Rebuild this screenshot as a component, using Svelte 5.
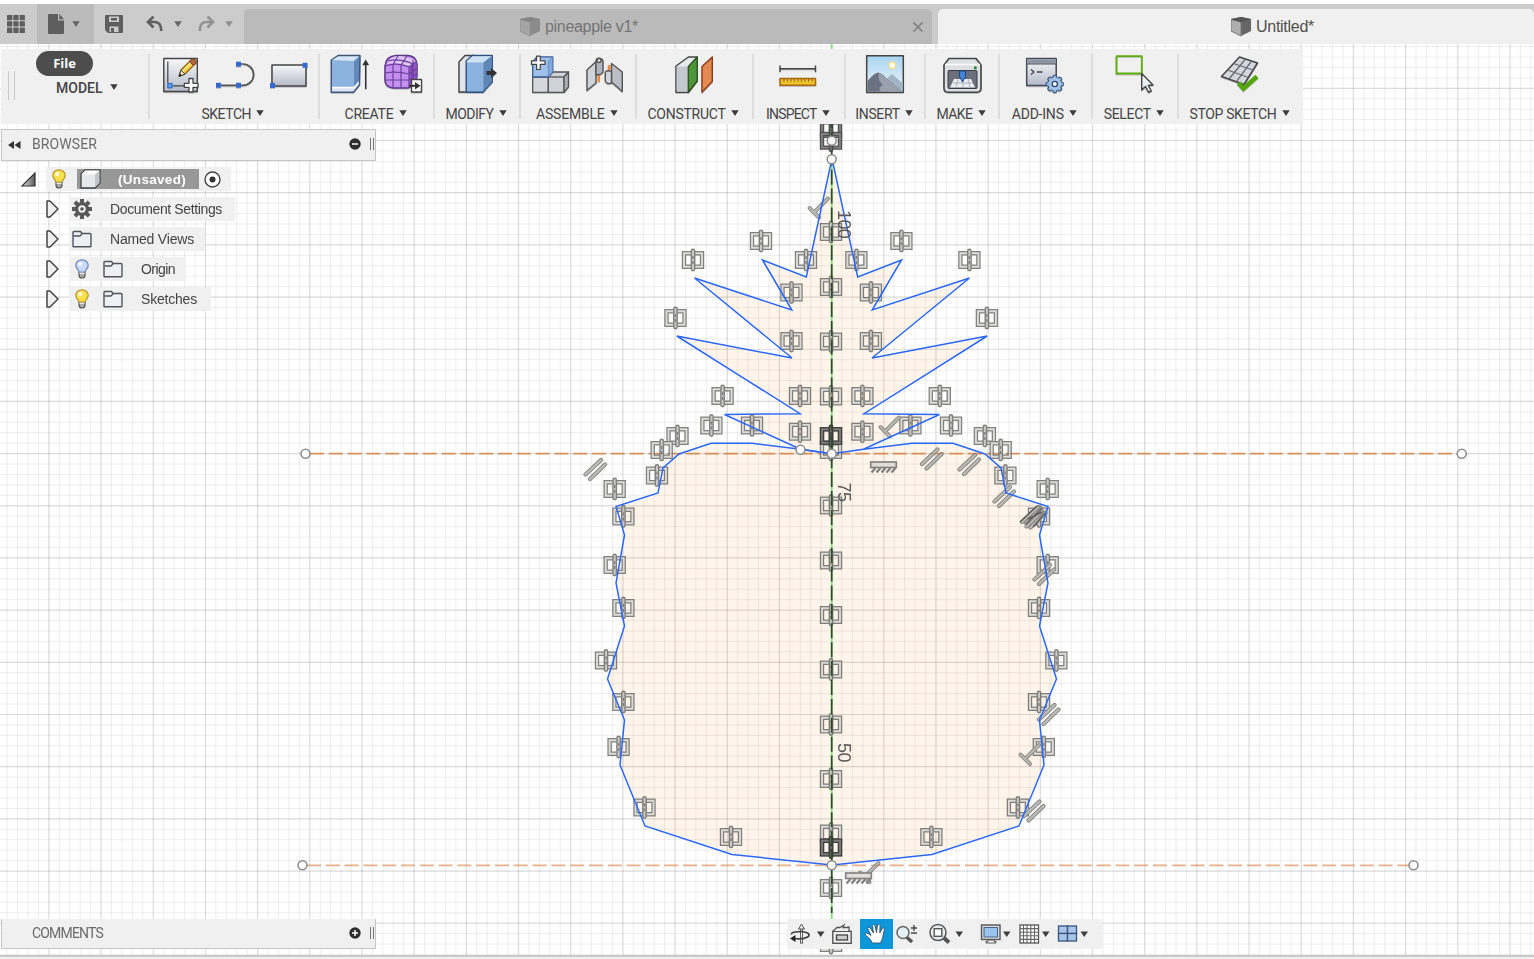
<script>
  const groups = [
    { name: 'SKETCH', w: 170.5, icons: ['sketch', 'line', 'rect'], label: 49.5, cls: 'nudge' },
    { name: 'CREATE', w: 115, icons: ['extrude', 'form'], label: 49 },
    { name: 'MODIFY', w: 86, icons: ['press'], label: 48 },
    { name: 'ASSEMBLE', w: 115.5, icons: ['component', 'joint'], label: 68.5 },
    { name: 'CONSTRUCT', w: 117, icons: ['plane'], label: 78 },
    { name: 'INSPECT', w: 92.5, icons: ['measure'], label: 50.5 },
    { name: 'INSERT', w: 80, icons: ['image'], label: 44.5 },
    { name: 'MAKE', w: 74, icons: ['printer'], label: 36 },
    { name: 'ADD-INS', w: 92.5, icons: ['script'], label: 52 },
    { name: 'SELECT', w: 86.5, icons: ['select'], label: 47 },
    { name: 'STOP SKETCH', w: 125, icons: ['stop'], label: 87 }
  ];

  // Spreads the letters of a label evenly over a set width.
  function fit(node, width) {
    const natural = node.getBoundingClientRect().width;
    node.style.letterSpacing = (width - natural) / node.textContent.length + 'px';
  }

  const range = (n) => Array.from({ length: n }, (_, i) => i);
  const OX = 831.6, OY = 453.6, STEP = 10.436;
  const vLines = range(148).map((i) => i - 79).map((i) => ({ p: OX + i * STEP, major: i % 5 === 0 })).filter((l) => l.p > 0);
  const hLines = range(92).map((i) => i - 43).map((i) => ({ p: OY + i * STEP, major: i % 5 === 0 })).filter((l) => l.p > 0);

  const crownLeft = [[831.7, 160], [806.3, 277], [762.5, 260], [791.8, 310], [694.5, 278], [792, 358], [676.8, 336], [800, 413.7], [724.5, 414.5], [800.5, 449.2]];
  const bodyLeft = [[800.5, 449.2], [752, 443.3], [711, 443.3], [679, 454], [663, 468], [658, 493], [616, 506.5], [624.5, 535], [616, 583], [624.5, 626], [607.5, 679], [624.5, 720], [620, 765], [645, 826], [732, 854.5], [831.7, 865]];
  const flip = (pts) => [...pts].reverse().map(([x, y]) => [1664 - x, y]);
  const str = (pts) => pts.map((p) => p.join(',')).join(' ');
  const crown = str([...crownLeft, [831.7, 453.7], ...flip(crownLeft)]);
  const body = str([[831.7, 453.7], ...bodyLeft, ...flip(bodyLeft)]);

  const pairs = [[761, 241], [693, 260], [806, 260], [791.5, 292.5], [675.5, 318], [791.5, 341], [722.6, 396], [800, 396], [800, 431.7], [711.4, 425.5], [752, 425.5], [677.5, 436], [661.7, 450], [657, 475.5], [614.7, 489], [623.4, 516.5], [614.7, 565], [623.4, 608], [606, 660.5], [623.4, 702], [618.6, 747], [644.5, 807.5], [731, 837]];
  const sym = [
    ...pairs.flatMap(([x, y]) => [[x, y], [1662.4 - x, y]]),
    ...[232, 287, 341.5, 396.5, 436, 450, 505.5, 560.5, 615, 669.5, 724.5, 779, 833.5, 847.5, 888, 943].map((y) => [831, y])
  ];
  const darkSym = [[831, 129], [831, 140.8], [831, 436], [831, 847.5]];
  const parallels = [[594.5, 469.5], [931, 459], [968.5, 464.5], [1003.5, 496.5], [1031, 517], [1035, 518], [1043.5, 574.5], [1048, 714.5], [1033, 811]];
  const perps = [[814, 212.5], [885, 431.5], [1025, 759], [864.5, 877]];
  const hatches = [[883.5, 467], [858.5, 878]];
  const points = [[831.7, 140.7], [831.7, 159.3], [800.5, 449.7], [831.7, 453.7], [831.7, 865.3], [305.5, 453.7], [1461.7, 453.7], [302.5, 865.3], [1413.5, 865.3]];
  const dims = [['100', 838, 210], ['75', 838, 482.5], ['50', 838, 743]];

  const rows = [
    { text: 'Document Settings', w: 112, total: 166, icons: ['gear'] },
    { text: 'Named Views', w: 84, total: 136, icons: ['folder'] },
    { text: 'Origin', w: 34, total: 117, icons: ['bulbOff', 'folder'] },
    { text: 'Sketches', w: 56, total: 142, icons: ['bulb', 'folder'] }
  ];
</script>

{#snippet caret(cls)}<svg class="caret {cls}" viewBox="0 0 8 6"><path d="M.3 .3H7.7L4 6Z" /></svg>{/snippet}

{#snippet cube(dark)}
  <svg width="20" height="20" viewBox="0 0 20 20">
    <path d="M0 2L10 0L20 2V14L10 19L0 14Z" fill={dark ? '#666' : '#8b8b8b'} />
    <path d="M0 2.5L10 5V19L0 14Z" fill={dark ? '#b0b0b0' : '#a5a5a5'} stroke={dark ? '#777' : '#929292'} stroke-width="1" />
    <path d="M0 2L10 0L20 2L10 5Z" fill={dark ? '#555' : '#858585'} />
  </svg>
{/snippet}

{#snippet bulb(on)}
  <svg width="14" height="20" viewBox="0 0 14 20">
    <path d="M4 11H10V16Q10 19 7 19Q4 19 4 16Z" fill="#aaa" stroke="#555" stroke-width="1.2" />
    <path d="M4.5 14.2H9.5" stroke="#eee" stroke-width="1.4" />
    <path d="M7 .8C3.3 .8 .8 3.3 .8 6.5C.8 9.5 3.6 10.6 4 13H10C10.4 10.6 13.2 9.5 13.2 6.5C13.2 3.3 10.7 .8 7 .8Z" fill={on ? '#f8df4c' : '#c8daff'} stroke={on ? '#b8962a' : '#7286ad'} stroke-width="1.2" />
    <circle cx="5.2" cy="5" r="2.2" fill="#fff" opacity=".75" />
  </svg>
{/snippet}

{#snippet treeIcon(kind)}
  {#if kind === 'gear'}
    <svg width="20" height="20" viewBox="0 0 20 20">
      <g fill="#595959">
        {#each range(8) as i}<rect x="8" y="0" width="4" height="5" transform="rotate({i * 45} 10 10)" />{/each}
      </g>
      <circle cx="10" cy="10" r="5.4" fill="none" stroke="#595959" stroke-width="3.4" />
      <circle cx="10" cy="10" r="1.8" fill="#595959" />
    </svg>
  {:else if kind === 'folder'}
    <svg width="20" height="20" viewBox="0 0 20 20">
      <path d="M1 17V3.5Q1 2.5 2 2.5H8.5L10 4.5H18Q19 4.5 19 5.5V17Q19 17.8 18 17.8H2Q1 17.8 1 17Z" fill="#eff0f4" stroke="#50545c" stroke-width="1.4" />
      <path d="M1.5 7H8L10 4.8" fill="none" stroke="#50545c" stroke-width="1.3" />
    </svg>
  {:else}
    <span class="bulb">{@render bulb(kind === 'bulb')}</span>
  {/if}
{/snippet}

{#snippet tool(kind)}
  <svg width="40" height="40" viewBox="0 0 40 40" fill="none" stroke-linejoin="round">
    {#if kind === 'sketch'}
      <rect x="2.8" y="4.5" width="33.5" height="33" fill="url(#silver)" stroke="#444" stroke-width="1.4" />
      <path d="M6.8 7.5V29M12 31.8H24" stroke="#444" stroke-width="1.2" />
      <rect x="6.8" y="29.5" width="4.4" height="4.4" fill="#55a0ee" stroke="#2a62b8" />
      <path d="M18 22.5L20 16L30.5 5.5L34.5 9.5L24 20Z" fill="#f9c838" stroke="#8a6218" stroke-width="1.2" />
      <path d="M21.5 17.5L31.5 7.5" stroke="#fff0a0" stroke-width="1.5" />
      <path d="M28.5 7.5L31 5Q32.5 4 34.5 6T35.3 9L32.5 11.5Z" fill="#b5683c" stroke="#6b3d28" />
      <path d="M18 22.5L20 16L24 20Z" fill="#f4dfb5" stroke="#444" />
      <path d="M18 22.5L19 19.5L21 21.5Z" fill="#222" />
      <path d="M28 24.5H32V29.3H37V33.3H32V38H28V33.3H23.3V29.3H28Z" fill="#fff" stroke="#444" stroke-width="1.3" />
    {:else if kind === 'line'}
      <path d="M3.3 31.3H28A10.6 10.6 0 0 0 28 10H23.3" stroke="#555" stroke-width="1.7" />
      <g fill="#356ad0"><rect x="1" y="28.8" width="5" height="5" /><rect x="21" y="28.8" width="5" height="5" /><rect x="21" y="7.7" width="5" height="5" /></g>
    {:else if kind === 'rect'}
      <rect x="3" y="11" width="34" height="21" fill="url(#silver)" stroke="#444" stroke-width="1.5" />
      <g fill="#356ad0"><rect x="1" y="29" width="5" height="5" /><rect x="33.5" y="8.8" width="5" height="5" /></g>
    {:else if kind === 'extrude'}
      <path d="M2.3 6L9 1.5H31L30.5 31L24.5 38.2H2.3Z" fill="#dbe6f2" />
      <path d="M2.3 6H25V33H2.3Z" fill="#8db2dd" /><path d="M2.3 6L9 1.5H31L25 7Z" fill="#d6e7f8" />
      <path d="M25 7L31 1.5V26L25 33Z" fill="#6389b8" />
      <path d="M2.3 33.5H25L31 27" stroke="#fff" stroke-width="1.3" />
      <path d="M2.3 6L9 1.5H31L30.5 31L24.5 38.2H2.3Z" stroke="#3e5677" stroke-width="1.4" />
      <path d="M36.7 35V9" stroke="#333" stroke-width="1.5" /><path d="M33.5 11L36.7 5.5L40 11Z" fill="#333" />
    {:else if kind === 'form'}
      <path d="M2 12Q3 2 13 1.5H25Q33 2 34 10V22Q32 32 25 34H10Q2 33 2 26Z" fill="#c390f0" stroke="#5c3785" stroke-width="1.5" />
      <path d="M26 13L33.5 8V24L26 32Z" fill="#9455cc" />
      <path d="M4 10Q14 8 26 12L33 7Q24 2 14 2Q6 3 4 10Z" fill="#dfc2f7" />
      <path d="M2 12Q14 8 26 13V33M26 13L33.5 7.5M10 10.5V34M18 11V34M2 19Q14 17 26 20L34 14.5M2 26H26L33.5 20M10 10.5L15 2M18 11L24 2M5 7Q16 4 29 9.5V30M30 6V26" stroke="#6d409b" stroke-width="1.2" />
      <rect x="28.5" y="25.5" width="10" height="12.5" fill="#fff" stroke="#444" stroke-width="1.4" />
      <path d="M26 31.8H33" stroke="#333" stroke-width="2" /><path d="M32 28L37.5 31.8L32 35.5Z" fill="#333" />
    {:else if kind === 'press'}
      <path d="M2 8L8 1.5H17L10 8V38H2Z" fill="#e1e4e9" stroke="#444" stroke-width="1.4" />
      <path d="M9.2 7L15 1.5H35.2V28L26 38.3H9.2Z" fill="#8bb2df" stroke="#30507c" stroke-width="1.4" />
      <path d="M9.8 7L15.5 2.2H34.5L26.5 8.5H9.8Z" fill="#cfe1f4" />
      <path d="M26.5 8.5L34.5 2.2V28L26.5 37.3Z" fill="#5e86b6" />
      <path d="M29.5 17H34V14L40 19L34 24V21H29.5Z" fill="#333" />
    {:else if kind === 'component'}
      <g stroke="#555" stroke-width="1.3">
        <path d="M2.7 23H18.3V38.3H2.7Z" fill="#d5d7dd" /><path d="M18.3 23L23 18H38.5L34 23V38.3H18.3Z" fill="#cfd2d8" />
        <path d="M34 23L38.5 18V33L34 38.3Z" fill="#a9adb7" /><path d="M18.3 23H34" />
        <path d="M2.7 7.7L7 2.8H22.7V18L18.3 23H2.7Z" fill="#9fc0ea" stroke="#3b5d91" />
        <path d="M18.3 7.7L22.7 2.8V18L18.3 23Z" fill="#83a8da" stroke="#5f84b8" stroke-width=".8" />
      </g>
      <path d="M6.6 2.2H10.2V6.8H15V10.4H10.2V15.5H6.6V10.4H1.5V6.8H6.6Z" fill="#fff" stroke="#444" stroke-width="1.2" />
    {:else if kind === 'joint'}
      <path d="M14.8 18V27.7M25 11V20" stroke="#f28a3c" stroke-width="2.5" />
      <g stroke="#555" stroke-width="1.4">
        <path d="M3 16L12 7.5V29L3 36.5Z" fill="#ced2d9" /><path d="M12 7.5Q12 4 15 4.3Q19.5 5 19 8V18Q17 21.5 12 20.5Z" fill="#b1b6c0" />
        <circle cx="15" cy="6.5" r="2" fill="#eee" />
        <path d="M27.5 9.5L38.3 18V37.5L27.5 28Z" fill="#b9bec7" /><path d="M21.3 18Q24 15.5 27.5 18V29Q23 31 21.3 27Z" fill="#d2d6dc" />
      </g>
    {:else if kind === 'plane'}
      <path d="M2 12L14.5 3H23V27L14.5 38.3H2Z" fill="#e8eaee" stroke="#444" stroke-width="1.4" />
      <path d="M2.7 12.5H14V37.6H2.7Z" fill="#c4c8d1" />
      <path d="M14.3 12.5L23.2 3V27L14.3 38.2Z" fill="#4e9438" stroke="#27541d" stroke-width="1.3" />
      <path d="M28 12.5L38.3 3V27.5L28 38.2Z" fill="#e58953" stroke="#8a3c18" stroke-width="1.4" />
    {:else if kind === 'measure'}
      <path d="M2 14.7H37.5M2 11.5V18M37.5 11.5V18" stroke="#444" stroke-width="1.4" />
      <rect x="2" y="24.5" width="35.5" height="6.8" fill="#edc22e" stroke="#a86a13" stroke-width="1.5" />
      <path d="M6 25v2.5M9.5 25v2.5M13 25v2.5M16.5 25v2.5M20 25v2.5M23.5 25v2.5M27 25v2.5M30.5 25v2.5M34 25v2.5" stroke="#8a5a10" />
    {:else if kind === 'image'}
      <rect x="1.7" y="1.7" width="36.6" height="36.6" fill="url(#sky)" stroke="#444" stroke-width="1.5" />
      <circle cx="27.3" cy="11.3" r="3.3" fill="#fff" stroke="#f6dd8c" stroke-width="1.5" />
      <path d="M18 28L27 20L37.6 29V37.5H18Z" fill="#a3b3c6" />
      <path d="M2.5 27Q9 19 13 18.5Q17 19 21 24L37 37.5H2.5Z" fill="#6a7180" /><path d="M14 19Q18 20 22 25L37 37.5H16Q12 34 18 31Q12 26 14 19Z" fill="#9aa1ae" />
    {:else if kind === 'printer'}
      <path d="M2 11L7 4.5H34L39 11V34Q39 38 35 38.2H6Q2 38 2 34Z" fill="#dddfe4" stroke="#444" stroke-width="1.6" />
      <path d="M3 10.5H38" stroke="#fff" stroke-width="1.5" />
      <rect x="6" y="16.5" width="29" height="18" rx="1" fill="#6a6f7a" stroke="#3a3d44" />
      <path d="M12 25H29L33 33.5H8Z" fill="#eceef2" /><path d="M11 29H31M16 25L14 33M21 25V33M26 25L28 33" stroke="#aab0bc" />
      <path d="M17.5 17H23.5V22.5L20.5 28L17.5 22.5Z" fill="#4384d8" stroke="#1b4686" /><rect x="32" y="12.5" width="2.7" height="2.7" fill="#1c8a2c" />
    {:else if kind === 'script'}
      <rect x="1.7" y="4.5" width="29.5" height="27" fill="url(#silver)" stroke="#444b58" stroke-width="1.5" />
      <rect x="2.5" y="5.2" width="28" height="4.5" fill="#8e96a6" /><path d="M2 10H31" stroke="#4a5160" />
      <path d="M6 15.5L9 18L6 20.5M12 18H17.5" stroke="#444" stroke-width="1.5" />
      <g fill="#8cb1dd" stroke="#28466f">{#each range(8) as i}<rect x="27.8" y="21.3" width="4" height="6" rx="1.5" transform="rotate({i * 45} 29.8 30)" />{/each}</g>
      <circle cx="29.8" cy="30" r="6.4" fill="#a3c2e6" /><circle cx="29.8" cy="30" r="2.6" fill="#fff" stroke="#28466f" stroke-width="1.3" />
    {:else if kind === 'select'}
      <rect x="2.5" y="2.2" width="25.3" height="17.3" fill="none" stroke="#5fae0c" stroke-width="1.8" />
      <path d="M27.7 19.5V36L31.5 32.5L34.5 38.3L37.3 37L34.3 31.5L39 31Z" fill="#eceff4" stroke="#444" stroke-width="1.4" />
    {:else}
      <path d="M19.5 3L37.5 9L24 30.5L1.5 22.5Z" fill="#d4d7dd" stroke="#444" stroke-width="1.5" />
      <path d="M25.5 5L9 25M31.5 7L16.5 27.7M13.5 9.5L33 16M7.5 16L28.5 23.5" stroke="#666a72" stroke-width="1.3" />
      <path d="M18.5 29L23.5 34.5L37 22.5" stroke="#52a50f" stroke-width="4.6" stroke-linejoin="miter" />
    {/if}
  </svg>
{/snippet}

<div class="app">
  <svg class="canvas" width="1534" height="955" viewBox="0 0 1534 955">
    <defs>
      <linearGradient id="silver" x1="0" y1="0" x2="0" y2="1"><stop offset="0" stop-color="#f8f8fa" /><stop offset="1" stop-color="#b4bac8" /></linearGradient>
      <linearGradient id="sky" x1="0" y1="0" x2="0" y2="1"><stop offset="0" stop-color="#a9d4f0" /><stop offset="1" stop-color="#f0f8fc" /></linearGradient>
      <linearGradient id="fold" x1="0" y1="0" x2="1" y2="0"><stop offset="0" stop-color="#eee" /><stop offset="1" stop-color="#555" /></linearGradient>
      <g id="mirror" fill="none">
        <path d="M-2 -6.8H-9V6.8H-2M2 -6.8H9V6.8H2" stroke="#666" stroke-width="4.4" />
        <path d="M-2 -6.8H-9V6.8H-2M2 -6.8H9V6.8H2" stroke="#d6d6d2" stroke-width="1.9" />
        <rect x="-1.7" y="-10.7" width="3.4" height="21.4" rx="1.7" fill="#bdbdba" stroke="#666" stroke-width="1.4" />
        <path d="M0 -4V-1M0 1V4" stroke="#666" stroke-width="1.4" />
      </g>
      <g id="parallel" stroke-linecap="round">
        <path d="M-9 5L6.5 -9.5M-4.5 9.5L10.5 -5" stroke="#747472" stroke-width="4.4" />
        <path d="M-9 5L6.5 -9.5M-4.5 9.5L10.5 -5" stroke="#aeaeaa" stroke-width="2.2" />
      </g>
      <g id="perp" stroke-linecap="round">
        <path d="M-4.5 -4.5L5 5M0 0L14 -14" stroke="#787876" stroke-width="4" />
        <path d="M-4.5 -4.5L5 5M0 0L14 -14" stroke="#adada9" stroke-width="1.8" />
      </g>
      <g id="hatch">
        <rect x="-12.8" y="-5" width="25.6" height="5.5" fill="#dcdad4" stroke="#6a6a6a" stroke-width="1.7" />
        <path d="M-12 5.5L-8 1M-7 5.5L-3 1M-2 5.5L2 1M3 5.5L7 1M8 5.5L12 1" stroke="#6a6a6a" stroke-width="2.4" />
      </g>
    </defs>
    <rect width="1534" height="955" fill="#fff" />
    <g class="region"><polygon points={crown} /><polygon points={body} /></g>
    {#each vLines as l}<path class={l.major ? 'major' : 'minor'} d="M{l.p} 44V955" />{/each}
    {#each hLines as l}<path class={l.major ? 'major' : 'minor'} d="M0 {l.p}H1534" />{/each}
    <path d="M831.7 44V919" stroke="#86de7c" stroke-width="1.8" />
    <path d="M310 453.7H1457" class="construction strong" />
    <path d="M307 865.3H1409" class="construction" />
    <g class="symbols">
      {#each sym as [x, y]}<use href="#mirror" {x} {y} />{/each}
      {#each parallels as [x, y]}<use href="#parallel" {x} {y} />{/each}
      {#each perps as [x, y]}<use href="#perp" {x} {y} />{/each}
      {#each hatches as [x, y]}<use href="#hatch" {x} {y} />{/each}
    </g>
    <g class="stacked">{#each darkSym as [x, y]}<use href="#mirror" {x} {y} />{/each}</g>
    <path d="M1020 522L1037 506M1026 524L1042 508M1033 527L1045 513M1028 519L1042 512" stroke="#444" stroke-width="1.5" opacity=".75" />
    <path d="M831.7 124V913" stroke="#2d4a2d" stroke-width="1.7" stroke-dasharray="15 3.9" stroke-dashoffset="11" />
    <g class="outline"><polyline points={crown} /><polyline points={body} /></g>
    {#each dims as [t, x, y]}<text class="dim" transform="translate({x} {y}) rotate(90)">{t}</text>{/each}
    {#each points as [x, y]}<circle class="point" cx={x} cy={y} r="4.5" />{/each}
  </svg>

  <header class="tabs">
    <div class="quick">
      <span class="grid-btn"><svg width="18" height="18" viewBox="0 0 18 18" fill="#5e5e5e">{#each range(9) as i}<rect x={(i % 3) * 6.3} y={Math.floor(i / 3) * 6.3} width="5.3" height="5.3" rx=".5" />{/each}</svg></span>
      <span class="file-btn">
        <svg width="16" height="20" viewBox="0 0 16 20" fill="#5e5e5e"><path d="M0 1Q0 0 1 0H10V6.5H16V19Q16 20 15 20H1Q0 20 0 19Z" /><path d="M11.3 0L16 5.2H11.3Z" /></svg>
        {@render caret('mid')}
      </span>
      <span class="save"><svg width="18" height="18" viewBox="0 0 18 18"><path d="M0 1Q0 0 1 0H17Q18 0 18 1V17Q18 18 17 18H3L0 15Z" fill="#5e5e5e" /><path d="M4 1.5H14V7H4ZM4.5 11.5H13.5V17H4.5Z" fill="#ccc" /><path d="M6 3H12V5.5H6ZM6 13H9V17H6Z" fill="#5e5e5e" /></svg></span>
      <span class="undo"><svg width="17" height="16" viewBox="0 0 17 16"><path d="M7.5 .5L2 6L7.5 11.5M2 6H9Q15.5 6.5 15.2 15" fill="none" stroke="#606060" stroke-width="2.6" /></svg>{@render caret('mid')}</span>
      <span class="redo"><svg width="17" height="16" viewBox="0 0 17 16"><path d="M9.5 .5L15 6L9.5 11.5M15 6H8Q1.5 6.5 1.8 15" fill="none" stroke="#929292" stroke-width="2.6" /></svg>{@render caret('light')}</span>
    </div>
    <div class="tab idle">
      {@render cube(false)}<span class="title" use:fit={93}>pineapple v1*</span>
      <svg class="close" width="10" height="10" viewBox="0 0 10 10"><path d="M.5 .5L9.5 9.5M9.5 .5L.5 9.5" stroke="#868686" stroke-width="1.8" /></svg>
    </div>
    <div class="tab open">{@render cube(true)}<span class="title" use:fit={58}>Untitled*</span></div>
  </header>

  <nav class="toolbar">
    <div class="workspace">
      <i class="grip"></i>
      <div class="mode"><span class="tip">File</span><div class="model"><span use:fit={46.5}>MODEL</span>{@render caret('dark')}</div></div>
    </div>
    {#each groups as g}
      <section class="group" style:width="{g.w}px">
        <div class="icons {g.cls ?? ''}">{#each g.icons as k}{@render tool(k)}{/each}</div>
        <div class="label"><span use:fit={g.label}>{g.name}</span>{@render caret('dark')}</div>
      </section>
    {/each}
  </nav>

  <main>
    <aside>
      <div class="panel browser">
        <svg class="collapse" width="13" height="8" viewBox="0 0 13 8"><path d="M6 0V8L0 4ZM12.5 0V8L6.5 4Z" fill="#333" /></svg>
        <span class="heading" use:fit={65}>BROWSER</span>
        <svg class="knob" width="12" height="12" viewBox="0 0 12 12"><circle cx="6" cy="6" r="5.7" fill="#2e2e2e" /><path d="M3 6H9" stroke="#fff" stroke-width="1.5" /></svg>
        <i class="handle"></i>
      </div>
      <div class="tree">
        <div class="row root">
          <svg width="15" height="15" viewBox="0 0 15 15"><path d="M1 14L14 1V14Z" fill="url(#fold)" stroke="#333" stroke-width="1.2" /></svg>
          <div class="item first">
            {@render bulb(true)}
            <div class="doc">
              <svg width="21" height="20" viewBox="0 0 21 20"><path d="M1 5L5 1H20V14L15 19H1Z" fill="#e6e8eb" stroke="#444" stroke-width="1.3" /><path d="M1.8 5L5.3 1.6H19.3L15 5.5Z" fill="#fff" /><path d="M15 5.5L19.3 1.6V14L15 18.3Z" fill="#c2c5ca" /></svg>
              <b use:fit={68}>(Unsaved)</b>
            </div>
            <svg width="17" height="17" viewBox="0 0 17 17"><circle cx="8.5" cy="8.5" r="7.5" fill="#fff" stroke="#444" stroke-width="1.4" /><circle cx="8.5" cy="8.5" r="3" fill="#333" /></svg>
          </div>
        </div>
        {#each rows as r}
          <div class="row">
            <svg class="expand" width="13" height="18" viewBox="0 0 13 18"><path d="M1 1H4L12 9L4 17H1Z" fill="#eee" stroke="#444" stroke-width="1.5" stroke-linejoin="round" /></svg>
            <div class="item" style:width="{r.total}px">{#each r.icons as k}{@render treeIcon(k)}{/each}<span class="name"><span use:fit={r.w}>{r.text}</span></span></div>
          </div>
        {/each}
      </div>
    </aside>
    <div class="bottom">
      <div class="panel comments">
        <span class="heading" use:fit={71}>COMMENTS</span>
        <svg class="knob" width="12" height="12" viewBox="0 0 12 12"><circle cx="6" cy="6" r="5.7" fill="#2e2e2e" /><path d="M3 6H9M6 3V9" stroke="#fff" stroke-width="1.5" /></svg>
        <i class="handle"></i>
      </div>
      <div class="viewbar">
        <svg width="316" height="30" viewBox="0 0 316 30" fill="none">
          <path d="M14.5 9V24.5" stroke="#555" stroke-width="3" /><path d="M14.5 8V23.5" stroke="#eee" stroke-width="1.2" />
          <path d="M11.5 10L14.5 5L17.5 10Z" fill="#eee" stroke="#555" />
          <path d="M7 19.5Q16 21 21.5 17.5Q24 13.5 14.5 12.5Q4 12.5 4.5 15.5" stroke="#444" stroke-width="1.7" /><path d="M3 19.5L8.5 16V23Z" fill="#222" />
          <g fill="#3f3f3f"><path d="M30 12.500H37.5L33.7 18ZM168.5 12.500H176L172.2 18ZM216 12.500H223.5L219.7 18ZM255 12.500H262.5L258.7 18ZM293.5 12.500H301L297.2 18Z" /></g>
          <rect x="45.8" y="12.3" width="18.4" height="12" fill="#eee" stroke="#555" stroke-width="1.4" /><rect x="49.5" y="16" width="11" height="5" fill="#ccc" stroke="#444" stroke-width="1.3" />
          <path d="M46 12L50 8.5H53L57 6L56 8.5H60L62 8V12" fill="#eee" stroke="#555" stroke-width="1.3" />
          <rect x="73" width="33" height="30" fill="#0d96d8" />
          <path d="M85.5 24Q83 19 78.5 16Q77.5 14.5 79.5 14Q81.5 14.5 84 16.5L80.8 9.5Q81 7.5 82.8 8.5L86.5 14L85.5 6.5Q86.5 4.5 88 6.5L89.5 13.5L90.5 6Q92 4.5 93 6.5L92.8 14L95.5 9Q97.5 8 97.3 10.5L95.5 19L93.5 24Z" fill="#fff" stroke="#345" stroke-width=".8" />
          <path d="M119.5 18L125 23" stroke="#555" stroke-width="3.5" /><circle cx="116" cy="13.5" r="6" fill="#e5f0f6" stroke="#666" stroke-width="1.5" />
          <path d="M127 6V12M124 9H130M124 14H130" stroke="#444" stroke-width="1.3" />
          <path d="M156.5 18.5L162 23.5" stroke="#555" stroke-width="4" /><circle cx="151" cy="13.5" r="8" fill="#e8edf0" stroke="#555" stroke-width="1.5" /><rect x="147.2" y="9.7" width="7.6" height="7.6" fill="#fff" stroke="#555" stroke-width="1.4" />
          <rect x="194.5" y="6" width="18.5" height="14.5" fill="#ddd" stroke="#555" stroke-width="1.4" /><rect x="197" y="8.5" width="13.5" height="9.5" fill="#9cc3ee" stroke="#46688f" /><path d="M201 21V22.5H199V24H209V22.5H207V21Z" fill="#fff" stroke="#555" />
          <rect x="233" y="6" width="18.5" height="18" fill="#fff" stroke="#555" stroke-width="1.3" /><path d="M236.5 6V24M240 6V24M243.8 6V24M247.5 6V24M233 9.6H251.5M233 13.2H251.5M233 16.8H251.5M233 20.4H251.5" stroke="#666" stroke-width="1.1" />
          <g fill="#a9c5e8" stroke="#385580" stroke-width="1.3"><rect x="271.5" y="7" width="9" height="7.5" /><rect x="280.5" y="7" width="9" height="7.5" /><rect x="271.5" y="14.5" width="9" height="7.5" /><rect x="280.5" y="14.5" width="9" height="7.5" /></g>
        </svg>
      </div>
    </div>
  </main>
  <footer></footer>
</div>

<style>
  :global(body) { background: #fff; }
  .app { position: relative; width: 1534px; height: 959px; overflow: hidden; display: flex; flex-direction: column; font-family: "Liberation Sans", Arial, sans-serif; font-size: 14px; color: #444; }
  .app svg { display: block; flex: none; }
  .canvas { position: absolute; left: 0; top: 0; }
  .minor { stroke: #000; stroke-opacity: .07; }
  .major { stroke: #000; stroke-opacity: .14; stroke-width: 1.2; }
  .region { fill: #fff5ea; }
  .outline { fill: none; stroke: #2b68fa; stroke-width: 1.5; }
  .construction { fill: none; stroke: #da9259; stroke-opacity: .7; stroke-width: 1.8; stroke-dasharray: 14 4.8; }
  .construction.strong { stroke: #d58a4e; stroke-opacity: .9; }
  .symbols { opacity: .82; }
  .stacked { filter: brightness(.5); opacity: .85; }
  .point { fill: #fffffff0; stroke: #8e8e8e; stroke-width: 1.6; }
  .dim { font-size: 18px; fill: #5a5a5a; letter-spacing: -.6px; }

  .tabs { position: relative; margin-top: 4px; height: 40px; flex: none; background: #ccc; display: flex; align-items: flex-end; }
  .quick { width: 243.5px; height: 40px; display: flex; align-items: center; }
  .quick span { display: flex; align-items: center; height: 40px; box-sizing: border-box; }
  .grid-btn { width: 37px; padding-left: 7px; }
  .file-btn { width: 57px; padding-left: 11px; gap: 8px; background: #bbb; }
  .save { width: 52px; padding-left: 11px; }
  .undo { width: 52px; gap: 11px; }
  .redo { gap: 10px; }
  .tab { height: 35px; box-sizing: border-box; border-radius: 5px 5px 0 0; display: flex; align-items: center; font-size: 16px; position: relative; }
  .tab .title { margin-left: 5px; white-space: nowrap; }
  .idle { width: 688.5px; background: #bababa; color: #747474; padding-left: 276.5px; }
  .idle .close { margin-left: auto; margin-right: 9px; }
  .open { margin-left: 5.5px; flex: 1; background: #f0f0f0; color: #505050; padding-left: 293.5px; }

  .caret { width: 8px; height: 6px; fill: #3c3c3c; }
  .caret.mid { fill: #666; margin-top: -1px; }
  .caret.light { fill: #929292; margin-top: -1px; }
  .toolbar { position: relative; margin: 5px 0 0 1px; width: 1301.5px; height: 75px; flex: none; background: #f0f0f0; display: flex; font-family: Roboto, sans-serif; font-size: 14px; }
  .workspace { width: 146.5px; flex: none; display: flex; }
  .grip { width: 5px; flex: none; height: 29px; margin: 22px 0 0 7px; border: solid #c9c9c9; border-width: 0 1.5px; }
  .mode { margin: 2px 0 0 20px; }
  .tip { display: block; box-sizing: border-box; width: 57px; height: 25px; margin-left: 1px; border-radius: 13px; background: #4d4d4d; color: #fff; font: bold 13px/25px "Open Sans", sans-serif; text-align: center; }
  .model { display: flex; align-items: center; gap: 7px; margin: 4px 0 0 21px; line-height: 16px; font-weight: 500; }
  .group { box-sizing: border-box; flex: none; padding-top: 5px; background: linear-gradient(#ddd, #ddd) 0 5px / 2px 65px no-repeat; }
  .icons { display: flex; justify-content: center; gap: 14px; padding-left: 1px; }
  .icons svg { filter: drop-shadow(0 1px .5px #0003); }
  .icons.nudge { padding-left: 4px; }
  .label { display: flex; justify-content: center; align-items: center; gap: 5px; margin-top: 12px; line-height: 16px; white-space: nowrap; }
  .label .caret, .model .caret { width: 8px; margin-top: -2px; }

  main { position: relative; flex: 1; display: flex; flex-direction: column; justify-content: space-between; }
  .panel { width: 375px; height: 32px; box-sizing: border-box; background: #f0f0f0; border: 1.5px solid #c6c6c6; display: flex; align-items: center; margin-left: 1px; }
  .heading { font: 14px Roboto, sans-serif; color: #6b6b6b; }
  .browser { margin-top: 5px; padding-bottom: 1.5px; }
  .collapse { margin: 1px 11.5px 0 5.5px; }
  .comments { border-top: 0; padding-left: 30px; padding-bottom: 1.5px; }
  .knob { margin-left: auto; margin-right: 9px; }
  .handle { width: 2px; height: 12px; border: solid #777; border-width: 0 1px 0 1.5px; margin-right: 1px; }
  .tree { padding: 6px 0 0 20px; display: flex; flex-direction: column; gap: 6px; }
  .row { display: flex; align-items: center; height: 24px; padding-left: 26px; }
  .root { padding-left: 1px; }
  .item { display: flex; align-items: center; height: 24px; box-sizing: border-box; background: #f0f0f0; margin-left: 10px; padding-left: 3px; gap: 11px; }
  .item.first { width: 185px; padding-left: 6px; gap: 0; font-size: 13.5px; }
  .item :global(.name) { margin-left: 7px; white-space: nowrap; }
  .bulb { width: 20px; padding-left: 3px; box-sizing: border-box; }
  .doc { width: 122px; height: 20px; margin: 0 5px 0 11px; padding-left: 3px; box-sizing: border-box; background: #989898; color: #fff; display: flex; align-items: center; gap: 17px; }
  .bottom { display: flex; align-items: flex-end; padding-bottom: 6px; }
  .viewbar { margin-left: 411px; width: 316px; height: 30px; background: #f0f0f0; }
  .comments { height: 30px; }
  footer { position: relative; height: 4px; flex: none; box-sizing: border-box; background: #f0f0f0; border-top: 2px solid #c8c8c8; }
</style>
